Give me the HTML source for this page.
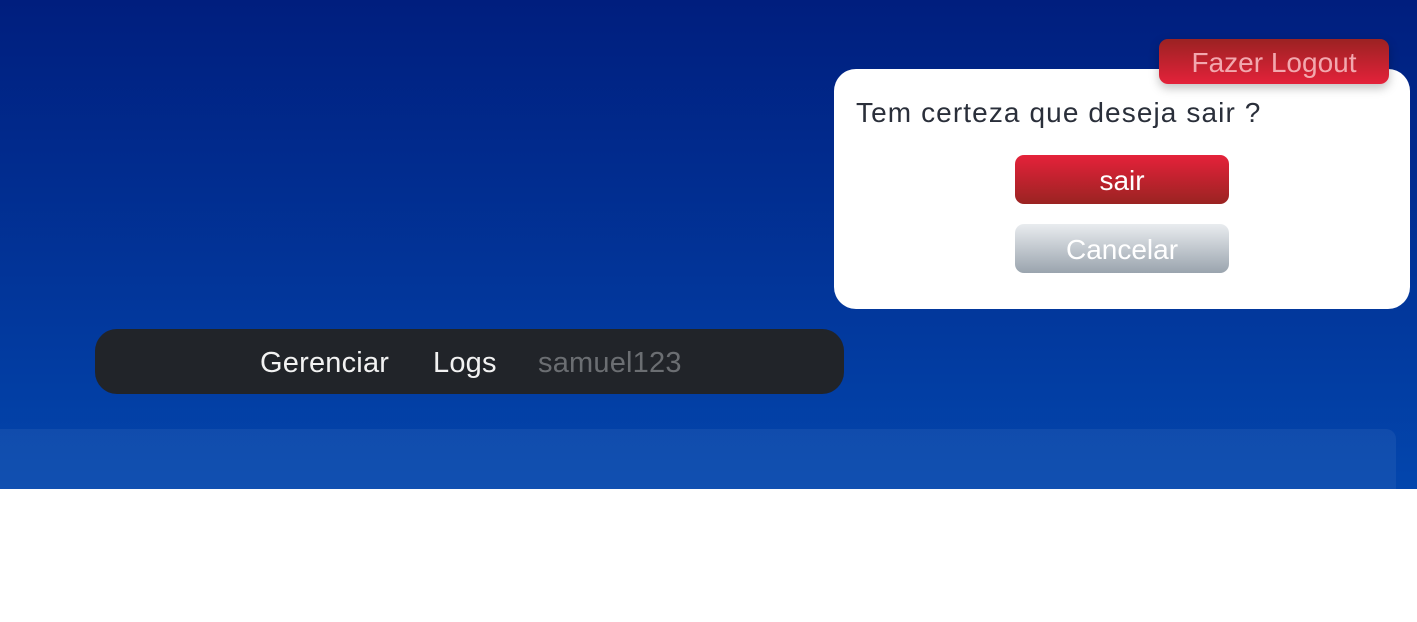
<!DOCTYPE html>
<html><head><style>
body{margin:0;width:1417px;height:622px;background:#fff;font-family:"Liberation Sans",sans-serif;position:relative;overflow:hidden}
.bg{position:absolute;left:0;top:0;width:1417px;height:489px;background:linear-gradient(#001e7e,#0346ad)}
.panel{position:absolute;left:0;top:429px;width:1396px;height:60px;background:rgba(255,255,255,0.06);border-top-right-radius:10px}
.nav{position:absolute;left:95px;top:329px;width:749px;height:65px;background:#212429;border-radius:22px}
.nav span{position:absolute;top:18px;font-size:29px;color:#f2f2f2;letter-spacing:0.2px}
.modal{position:absolute;left:834px;top:69px;width:576px;height:240px;background:#fff;border-radius:22px}
.modal p{position:absolute;left:22px;top:28px;margin:0;font-size:28px;color:#2a2f3a;letter-spacing:1.1px}
.btn{position:absolute;left:181px;width:214px;height:49px;border-radius:9px;color:#fff;font-size:28px;text-align:center;line-height:51px}
.logout{position:absolute;left:1159px;top:39px;width:230px;height:45px;border-radius:9px;background:linear-gradient(#9b2222,#e4223a);color:#f2a8ae;font-size:28px;text-align:center;line-height:47px;box-shadow:0 4px 10px rgba(0,0,0,.25)}
</style></head><body>
<div class="bg"></div>
<div class="panel"></div>
<div class="nav"><span style="left:165px">Gerenciar</span><span style="left:338px">Logs</span><span style="left:443px;color:#6b6e72">samuel123</span></div>
<div class="modal"><p>Tem certeza que deseja sair ?</p>
<div class="btn" style="top:86px;background:linear-gradient(#e5223a,#9a2322)">sair</div>
<div class="btn" style="top:155px;background:linear-gradient(#e9ecef,#9aa4ae)">Cancelar</div>
</div>
<div class="logout">Fazer Logout</div>
</body></html>
